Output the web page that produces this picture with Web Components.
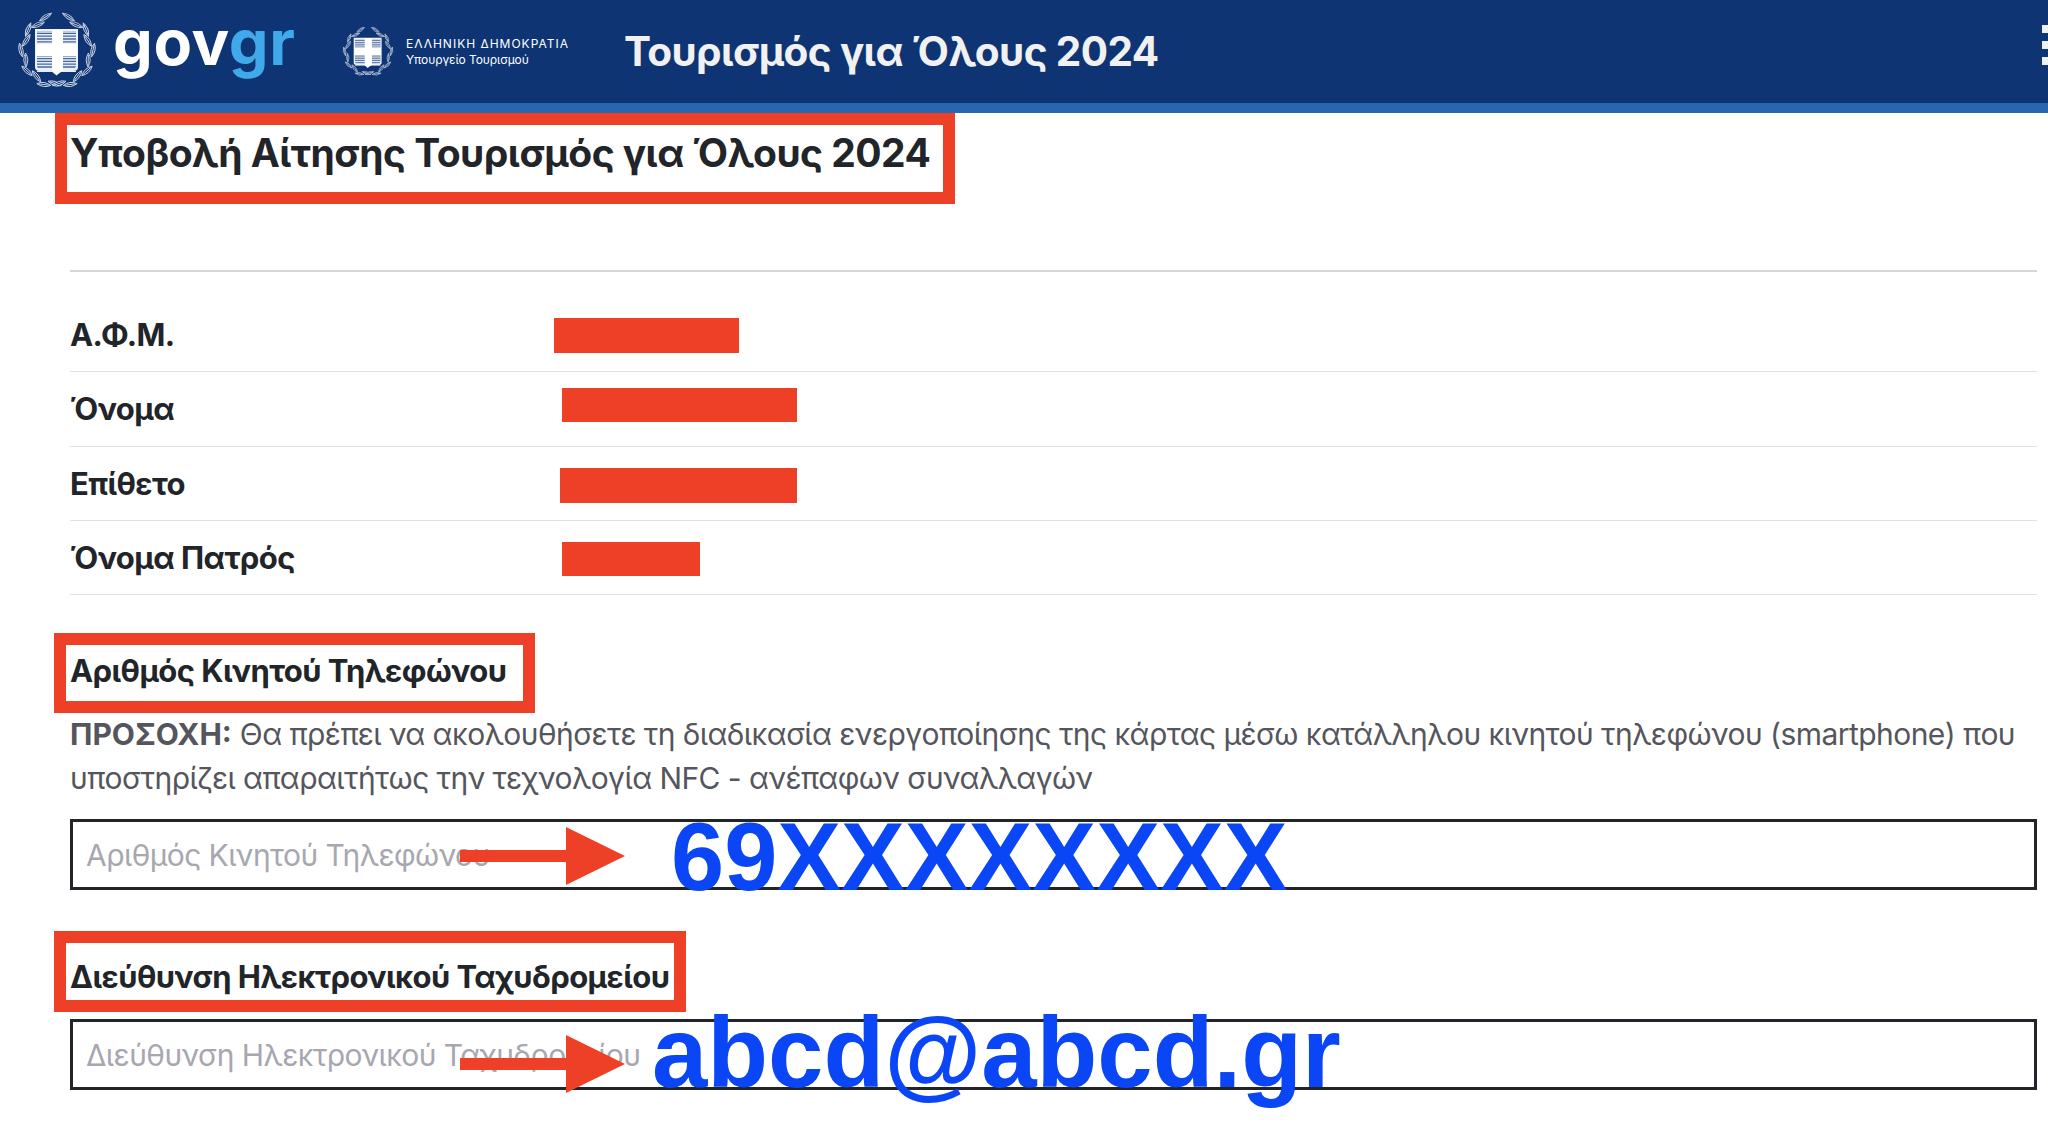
<!DOCTYPE html>
<html lang="el">
<head>
<meta charset="UTF-8">
<title>Τουρισμός για Όλους 2024</title>
<style>
  html, body { margin: 0; background: #fff; }
  body { font-family: Inter, "Liberation Sans", sans-serif; color: #212529; overflow: hidden; height: 1147px; }
</style>
</head>
<body>
<app-page></app-page>
<script>
  // national emblem: shield with cross inside a wreath of leaves
  class GovEmblem extends HTMLElement {
    connectedCallback() {
      const size = this.getAttribute('size') || 80;
      let leaves = '';
      for (const side of [-1, 1]) {
        for (let i = 0; i < 10; i++) {
          const deg = 176 - i * 17.5;
          const a = deg * Math.PI / 180;
          const r = i % 2 ? 36 : 32.5;
          const x = (40 + side * Math.sin(a) * r).toFixed(1);
          const y = (40 - Math.cos(a) * r).toFixed(1);
          const rot = side * (deg + (i % 2 ? 14 : -14));
          leaves += `<path d="M-7 0Q0 -4 7 0Q0 4 -7 0ZM-5 0H5" transform="translate(${x} ${y}) rotate(${rot})"/>`;
        }
      }
      let stripes = '';
      for (let y = 21; y < 62; y += 2.8) {
        stripes += `<path d="M20 ${y}H59"/>`;
      }
      this.attachShadow({ mode: 'open' }).innerHTML = `
        <style>
          :host { display: block; width: ${size}px; height: ${size}px; flex: none; }
          svg { display: block; width: 100%; height: 100%; overflow: visible; }
        </style>
        <svg viewBox="0 0 80 80" aria-hidden="true">
          <g fill="#0e3474" stroke="#d5dcea" stroke-width=".9">${leaves}</g>
          <path d="M18 18H61V56C61 59 59 60 55 60H45L39.5 64.5 34 60H24C20 60 18 59 18 56Z" fill="#eef2f8"/>
          <path d="M20 20H59V55C59 57 57 58 54 58H25C22 58 20 57 20 55Z" fill="#46689e"/>
          <g stroke="#e6ebf4" stroke-width="1.5">${stripes}</g>
          <path d="M35 19H46V33H60V45H46V60L40 63 35 60V45H19V33H35Z" fill="#fff"/>
        </svg>`;
    }
  }
  customElements.define('gov-emblem', GovEmblem);

  class GovHeader extends HTMLElement {
    constructor() {
      super();
      this.attachShadow({ mode: 'open' }).innerHTML = `
        <style>
          :host { display: flex; align-items: center; height: 103px; background: #0e3474; border-bottom: 10px solid #2966b0; position: relative; color: #fff; }
          .seal { margin-left: 17px; margin-top: -2px; }
          .wordmark { font: 700 63px/1 Inter, sans-serif; letter-spacing: .6px; margin: -18px 0 0 16px; width: 229px; }
          .wordmark span { color: #3fa9e9; }
          .ministry { display: flex; align-items: center; gap: 12px; margin-top: 1px; }
          .ministry-text { font-family: Inter, sans-serif; font-size: 12px; line-height: 16px; }
          .ministry-text b { display: block; font-weight: 400; letter-spacing: 1px; }
          .ministry-text i { display: block; font-style: normal; letter-spacing: -.1px; }
          h1 { margin: 2px 0 0 55px; font: 700 40.5px/1 Inter, sans-serif; letter-spacing: -.6px; color: #f1f1f1; }
          .menu { position: absolute; left: 2042px; top: 25px; display: grid; gap: 8px; }
          .menu i { display: block; width: 8px; height: 8px; background: #f1f1f1; }
        </style>
        <gov-emblem class="seal" size="80"></gov-emblem>
        <div class="wordmark">gov<span>gr</span></div>
        <div class="ministry">
          <gov-emblem size="52"></gov-emblem>
          <div class="ministry-text"><b>ΕΛΛΗΝΙΚΗ ΔΗΜΟΚΡΑΤΙΑ</b><i>Υπουργείο Τουρισμού</i></div>
        </div>
        <h1>Τουρισμός για Όλους 2024</h1>
        <div class="menu"><i></i><i></i><i></i></div>`;
    }
  }
  customElements.define('gov-header', GovHeader);

  // heading with the red annotation frame drawn over it
  class FramedHeading extends HTMLElement {
    constructor() {
      super();
      this.attachShadow({ mode: 'open' }).innerHTML = `
        <style>
          :host { display: block; position: relative; width: max-content; font-weight: 700; color: #212529; }
          .frame { position: absolute; inset: var(--frame-inset); border: 12px solid #ee4026; pointer-events: none; }
        </style>
        <slot></slot><div class="frame"></div>`;
    }
  }
  customElements.define('framed-heading', FramedHeading);

  class InfoRow extends HTMLElement {
    constructor() {
      super();
      this.attachShadow({ mode: 'open' }).innerHTML = `
        <style>
          :host { display: flex; align-items: center; height: 74.33px; box-sizing: border-box; border-bottom: 1px solid #dee2e6; font: 700 31px Inter, sans-serif; letter-spacing: -.58px; color: #212529; }
          .label { width: var(--bar-left); flex: none; }
          .bar { width: var(--bar-width); height: var(--bar-height); background: #ee4026; margin-top: var(--bar-shift, 0); }
        </style>
        <div class="label"><slot></slot></div><div class="bar"></div>`;
    }
  }
  customElements.define('info-row', InfoRow);

  // bordered input with the blue example value and the red arrow over it
  class AnnotatedField extends HTMLElement {
    constructor() {
      super();
      this.attachShadow({ mode: 'open' }).innerHTML = `
        <style>
          :host { display: block; position: relative; height: 71px; box-sizing: border-box; border: 3px solid #212529; }
          input { display: block; width: 100%; height: 100%; box-sizing: border-box; border: 0; outline: 0; padding: 0 13px; background: transparent; font: 400 30px Inter, sans-serif; letter-spacing: -.56px; }
          input::placeholder { color: #a7a7b0; opacity: 1; }
          svg { position: absolute; left: 387px; top: var(--arrow-top); width: 168px; height: 60px; }
          .value { position: absolute; left: var(--value-left); top: var(--value-top); font: 700 var(--value-size) / 1 "Liberation Sans", Arial, sans-serif; color: #0a46f5; white-space: nowrap; }
        </style>
        <input id="field">
        <svg viewBox="0 0 168 60" aria-hidden="true"><path d="M0 24H106V1L165 30 106 59V36H0Z" fill="#ee4026"/></svg>
        <div class="value"><slot></slot></div>`;
    }
    connectedCallback() {
      this.shadowRoot.getElementById('field').placeholder = this.getAttribute('placeholder');
    }
  }
  customElements.define('annotated-field', AnnotatedField);

  class AppPage extends HTMLElement {
    constructor() {
      super();
      this.attachShadow({ mode: 'open' }).innerHTML = `
        <style>
          :host { display: block; }
          main { padding: 0 11px 0 70px; }
          .title { font-size: 39px; letter-spacing: -.52px; line-height: 47px; margin-top: 16px; --frame-inset: -16px -25px -28px -15px; }
          hr { border: 0; border-top: 2px solid #d5d6d8; margin: 94px 0 26px; height: 0; }
          .sub { font-size: 31px; letter-spacing: -.56px; line-height: 37px; margin-top: 57px; --frame-inset: -19px -29px -24px -16px; }
          .sub.mail { margin-top: 68px; --frame-inset: -27px -17px -17px -16px; }
          p { margin: 23px 0 19px; font: 400 30px/44px Inter, sans-serif; letter-spacing: -.55px; color: #55565d; }
          p b { font-weight: 700; letter-spacing: 0; }
          .phone { --arrow-top: 4px; --value-left: 598px; --value-top: -13px; --value-size: 95.6px; }
          .mail-field { margin-top: 24px; --arrow-top: 12px; --value-left: 579px; --value-top: -19px; --value-size: 99.5px; }
        </style>
        <gov-header></gov-header>
        <main>
          <framed-heading class="title">Υποβολή Αίτησης Τουρισμός για Όλους 2024</framed-heading>
          <hr>
          <div class="rows">
            <info-row style="--bar-left:484px;--bar-width:185px;--bar-height:35px;--bar-shift:1px">Α.Φ.Μ.</info-row>
            <info-row style="--bar-left:492px;--bar-width:235px;--bar-height:34px;--bar-shift:-8px">Όνομα</info-row>
            <info-row style="--bar-left:490px;--bar-width:237px;--bar-height:35px;--bar-shift:4px">Επίθετο</info-row>
            <info-row style="--bar-left:492px;--bar-width:138px;--bar-height:34px;--bar-shift:2px">Όνομα Πατρός</info-row>
          </div>
          <framed-heading class="sub">Αριθμός Κινητού Τηλεφώνου</framed-heading>
          <p><b>ΠΡΟΣΟΧΗ:</b> Θα πρέπει να ακολουθήσετε τη διαδικασία ενεργοποίησης της κάρτας μέσω κατάλληλου κινητού τηλεφώνου (smartphone) που υποστηρίζει απαραιτήτως την τεχνολογία NFC - ανέπαφων συναλλαγών</p>
          <annotated-field class="phone" placeholder="Αριθμός Κινητού Τηλεφώνου">69XXXXXXXX</annotated-field>
          <framed-heading class="sub mail">Διεύθυνση Ηλεκτρονικού Ταχυδρομείου</framed-heading>
          <annotated-field class="mail-field" placeholder="Διεύθυνση Ηλεκτρονικού Ταχυδρομείου">abcd@abcd.gr</annotated-field>
        </main>`;
    }
  }
  customElements.define('app-page', AppPage);
</script>
</body>
</html>
